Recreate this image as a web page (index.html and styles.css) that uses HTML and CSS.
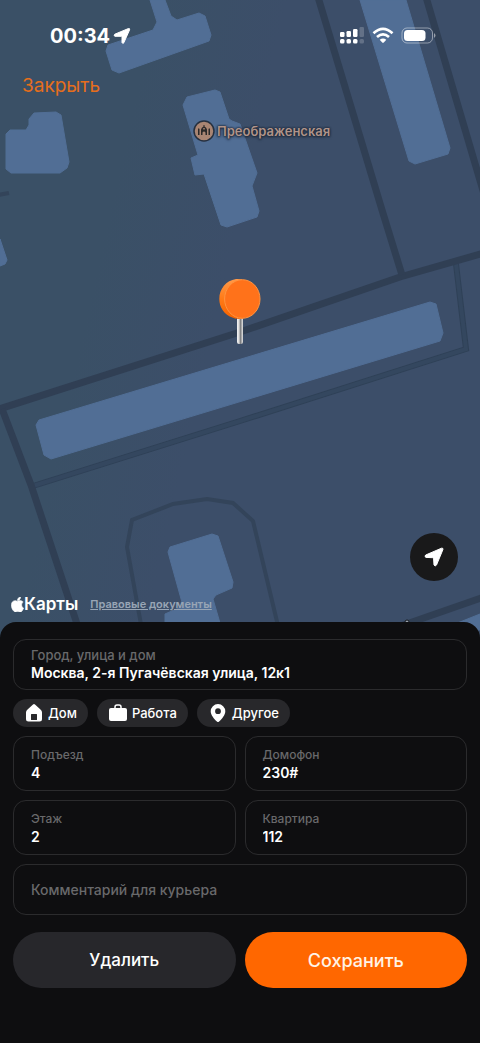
FILE: index.html
```html
<!DOCTYPE html>
<html lang="ru">

<head>
    <meta charset="UTF-8">
    <meta name="viewport" content="width=device-width, initial-scale=1.0">
    <title>Адрес доставки</title>
    <link rel="stylesheet" href="styles.css">
</head>

<body>
    <main class="map">
        <svg class="map-canvas" viewBox="0 0 480 640" preserveAspectRatio="xMidYMin slice" aria-hidden="true">
            <defs>
                <linearGradient id="land" x1="0" y1="0" x2="1" y2="0.3">
                    <stop offset="0.3" stop-color="#3a5066" />
                    <stop offset="0.55" stop-color="#3c4e69" />
                </linearGradient>
            </defs>
            <rect width="480" height="640" fill="url(#land)" />
            <!-- Paths -->
            <g class="path-edge">
                <path d="M33 486L240 421L466 349L456 264" />
            </g>
            <g class="path">
                <path d="M33 486L240 421L466 349L456 264" />
            </g>
            <!-- Roads -->
            <g class="road">
                <path d="M-4 410L240 332L400 277L484 253" />
                <path d="M318 -3L382 210L402 275" />
                <path d="M426 -3L474 160L484 194" />
                <path d="M2 409L31 485L79 630" />
                <path d="M484 597L395 628" />
            </g>
            <path class="lane" d="M142 630L127 547L132 520L173 504L207 499L233 503L253 521L279 630" />
            <path class="lane" d="M-2 195L9 193" />
            <!-- Buildings -->
            <g class="building">
                <path d="M150 0H165L171 16L177 20L199 13L205 16L211 35L209 41L119 73L112 70L106 51L108 45L153 30L157 22Z" />
                <path d="M6 134L10 130H26L29 125V119L34 113L56 112L61 115L69 162L67 168L60 173H11L6 169Z" />
                <path d="M0 239L7 260L5 264L0 266Z" />
                <path d="M187 97L215 90L220 92L229 119L232 121L240 124L257 173L252 186L259 211L257 217L227 227L221 225L204 174L195 175L191 158L198 155L183 105Z" />
                <path d="M360 0H406L450 148L448 154L415 164L409 161Z" />
                <path d="M36 425L39 420L430 302L436 304L443 333L440 341L51 459L44 455Z" />
                <path d="M168 552L170 547L212 534L218 536L233 582L232 588L216 595L213 599L222 630H165V614L183 606Z" />
                <path d="M480 614L440 630H480Z" />
            </g>
            <circle cx="407" cy="622" r="2" fill="#9aa3ad" stroke="#15181d" />
        </svg>

        <header class="status-bar">
            <div class="status-time">
                <span>00:34</span>
                <svg width="18" height="18" viewBox="0 0 18 18" aria-hidden="true">
                    <path d="M15.500 1.500Q17 1.200 16.600 2.800L10.800 15.800Q9.800 17.200 9 15.600V9.800Q9 9.300 8.400 9.300H2Q.200 8.600 1.800 7.200Z" fill="#fff" stroke="#fff" stroke-linejoin="round" />
                </svg>
            </div>
            <svg class="status-icons" width="98" height="18" viewBox="0 0 98 18" fill="#fff" aria-hidden="true">
                <rect x="1" y="5" width="4.500" height="5" rx="1.200" />
                <rect x="7.500" y="4" width="4.500" height="6" rx="1.200" />
                <rect x="14" y="2" width="4.500" height="8" rx="1.200" />
                <rect x="20.500" y="0" width="4.500" height="10" rx="1.200" opacity=".2" />
                <rect x="1" y="12" width="4.500" height="4.500" rx="1.500" />
                <rect x="7.500" y="12" width="4.500" height="4.500" rx="1.500" />
                <rect x="14" y="12" width="4.500" height="4.500" rx="1.500" />
                <rect x="20.500" y="12" width="4.500" height="4.500" rx="1.500" opacity=".2" />
                <g fill="none" stroke="#fff" stroke-width="2.700">
                    <path d="M34.500 6.200Q44 -2.400 53.500 6.200" />
                    <path d="M38 10Q44 4.600 50 10" />
                </g>
                <path d="M40.700 12.800Q44 10 47.300 12.800L44.800 15.400Q44 16 43.200 15.400Z" />
                <rect x="63" y="1" width="30.500" height="15" rx="5" fill="none" stroke="#fff" stroke-opacity=".45" />
                <path d="M95 6Q98 8.500 95 11Z" opacity=".5" />
                <rect x="65" y="3" width="21.500" height="11" rx="3.500" />
            </svg>
        </header>

        <button type="button" class="close-button">Закрыть</button>

        <div class="poi">
            <svg width="22" height="22" viewBox="0 0 22 22" aria-hidden="true">
                <circle cx="11" cy="11" r="10" fill="#a98573" stroke="#26303f" stroke-width="1.500" />
                <g fill="#2b2929">
                    <path d="M5 9Q5.700 7.500 6.500 9V15H5ZM15.500 9Q16.300 7.500 17 9V15H15.500Z" />
                    <path fill-rule="evenodd" d="M8 15V9.500Q8.500 7.500 10.500 6.500V5H11.500V6.500Q13.500 7.500 14 9.500V15H12.500V12.500Q11 10.500 9.500 12.500V15ZM10.200 9.500H11.800V8H10.200Z" />
                </g>
            </svg>
            <span>Преображенская</span>
        </div>

        <svg class="pin" width="44" height="68" viewBox="0 0 44 68" aria-hidden="true">
            <defs>
                <linearGradient id="needle">
                    <stop offset="0" stop-color="#f4f4f4" />
                    <stop offset="0.350" stop-color="#d8d8d8" />
                    <stop offset="0.550" stop-color="#77797c" />
                    <stop offset="1" stop-color="#e6e6e6" />
                </linearGradient>
                <linearGradient id="rim" x1="0" y1="0" x2="0" y2="1">
                    <stop offset="0" stop-color="#ff9a4a" />
                    <stop offset="0.500" stop-color="#ff7a16" />
                    <stop offset="1" stop-color="#f66200" />
                </linearGradient>
            </defs>
            <rect x="19" y="39" width="6" height="27" rx="2" fill="url(#needle)" />
            <path d="M18 1C20 .800 22 1 24 1.500L25 40.500C22 41.200 18 41.200 15 39.800C6 37 1.300 29 1.300 21C1.300 11 8 2.500 18 1Z" fill="url(#rim)" />
            <ellipse cx="24.300" cy="21" rx="17.700" ry="19.300" fill="#ff721a" stroke="#ff9440" stroke-width="1" />
        </svg>

        <button type="button" class="locate-button" aria-label="Моё местоположение">
            <svg width="20" height="20" viewBox="0 0 20 20" aria-hidden="true">
                <path d="M17.500 1.200Q19.400 .800 18.900 2.600L12.500 18Q11.200 19.800 10 18L9.600 11.800Q9.500 10.700 8.500 10.700L2 10.400Q0 9.500 1.700 8Z" fill="#fff" stroke="#fff" stroke-linejoin="round" />
            </svg>
        </button>

        <footer class="attribution">
            <span class="maps-logo">
                <svg width="13" height="15" viewBox="2 0 20 24" aria-hidden="true">
                    <path fill="#fff" stroke="#fff" d="M12.152 6.896c-.948 0-2.415-1.078-3.960-1.040-2.040.027-3.910 1.183-4.961 3.014-2.117 3.675-.546 9.103 1.519 12.090 1.013 1.454 2.208 3.090 3.792 3.039 1.520-.065 2.090-.987 3.935-.987 1.831 0 2.350.987 3.960.948 1.637-.026 2.676-1.480 3.676-2.948 1.156-1.688 1.636-3.325 1.662-3.415-.039-.013-3.182-1.221-3.220-4.857-.026-3.040 2.480-4.494 2.597-4.559-1.429-2.090-3.623-2.324-4.390-2.376-2-.156-3.675 1.090-4.610 1.090zM15.530 3.830c.843-1.012 1.400-2.427 1.245-3.830-1.207.052-2.662.805-3.532 1.818-.780.896-1.454 2.338-1.273 3.714 1.338.104 2.715-.688 3.559-1.701" />
                </svg>
                Карты
            </span>
            <a href="#" class="legal-link">Правовые документы</a>
        </footer>
    </main>

    <form class="sheet">
        <div class="field field-wide">
            <label for="address">Город, улица и дом</label>
            <input type="text" id="address" name="address" value="Москва, 2-я Пугачёвская улица, 12к1">
        </div>

        <div class="chips">
            <button type="button" class="chip">
                <svg width="18" height="18" viewBox="0 0 18 18" aria-hidden="true">
                    <path fill="#fff" fill-rule="evenodd" d="M8 .500Q9 -.300 10 .500L16 6Q17 7 17 8.500V15Q17 17.500 14.500 17.500H3.500Q1 17.500 1 15V8.500Q1 7 2 6ZM6.500 10Q6 10 6 10.500V15.500Q6 16 6.500 16H11.500Q12 16 12 15.500V10.500Q12 10 11.500 10Z" />
                </svg>
                Дом
            </button>
            <button type="button" class="chip">
                <svg width="18" height="18" viewBox="0 0 18 18" aria-hidden="true">
                    <rect x="0" y="4" width="18" height="13" rx="2" fill="#fff" />
                    <path d="M6 4V3Q6 1 8 1H10Q12 1 12 3V4" fill="none" stroke="#fff" stroke-width="1.500" />
                </svg>
                Работа
            </button>
            <button type="button" class="chip">
                <svg width="18" height="18" viewBox="0 0 18 18" aria-hidden="true">
                    <path fill="#fff" fill-rule="evenodd" d="M9 0A7.300 7.300 0 0 1 16.300 7.300C16.300 11 13 15 9.800 17.800Q9 18.400 8.200 17.800C5 15 1.700 11 1.700 7.300A7.300 7.300 0 0 1 9 0ZM9 4.300A2.900 2.900 0 1 0 9 10.100A2.900 2.900 0 1 0 9 4.300Z" />
                </svg>
                Другое
            </button>
        </div>

        <div class="field-grid">
            <div class="field">
                <label for="entrance">Подъезд</label>
                <input type="text" id="entrance" name="entrance" value="4">
            </div>
            <div class="field">
                <label for="intercom">Домофон</label>
                <input type="text" id="intercom" name="intercom" value="230#">
            </div>
            <div class="field">
                <label for="floor">Этаж</label>
                <input type="text" id="floor" name="floor" value="2">
            </div>
            <div class="field">
                <label for="flat">Квартира</label>
                <input type="text" id="flat" name="flat" value="112">
            </div>
        </div>

        <div class="field field-wide">
            <input type="text" id="comment" name="comment" placeholder="Комментарий для курьера" aria-label="Комментарий для курьера">
        </div>

        <div class="actions">
            <button type="button" class="action">Удалить</button>
            <button type="submit" class="action action-primary">Сохранить</button>
        </div>
    </form>
</body>

</html>
```
FILE: styles.css
```css
* {
    box-sizing: border-box;
}

body {
    display: flex;
    flex-direction: column;
    min-height: 100vh;
    margin: 0;
    background-color: #0e0e10;
    color: #fff;
    font-family: Inter, "Liberation Sans", sans-serif;
}

button,
input {
    font-family: inherit;
    color: inherit;
}

button {
    border: none;
    cursor: pointer;
}

svg {
    display: block;
    flex-shrink: 0;
}

/* Map */

.map {
    position: relative;
    display: flex;
    flex: 1;
    flex-direction: column;
    align-items: flex-start;
    min-height: 400px;
    padding-bottom: 26px;
    overflow: hidden;
}

.map-canvas {
    position: absolute;
    top: 0;
    left: 0;
    z-index: -1;
    width: 100%;
    height: 100%;
}

.road,
.path,
.path-edge,
.lane {
    fill: none;
    stroke: #303f54;
    stroke-width: 7px;
}

.path {
    stroke: #34475f;
    stroke-width: 4px;
}

.path-edge {
    stroke: #2f4157;
    stroke-width: 6px;
}

.lane {
    stroke: #33445a;
    stroke-width: 4px;
}

.building {
    fill: #516e95;
    stroke: #516e95;
    stroke-linejoin: round;
}

.status-bar {
    display: flex;
    justify-content: space-between;
    align-items: center;
    width: 100%;
    padding: 24px 43px 0 50px;
}

.status-time {
    display: flex;
    align-items: center;
    gap: 3px;
    font-size: 20px;
    font-weight: 700;
    line-height: 24px;
}

.close-button {
    margin: 25px 0 0 22px;
    padding: 0;
    background: none;
    color: #e66e1c;
    font-size: 19px;
    line-height: 26px;
}

.poi {
    position: absolute;
    top: 120px;
    left: calc(50% - 47px);
    display: flex;
    align-items: center;
    gap: 2px;
    color: #b0948a;
    font-size: 13px;
    font-weight: 600;
    text-shadow: 0 0 2px #1c2636, 0 0 2px #1c2636, 0 1px 3px #1c2636;
}

.pin {
    position: absolute;
    top: 278px;
    left: calc(50% - 22px);
}

.locate-button {
    display: grid;
    place-items: center;
    width: 48px;
    height: 48px;
    margin: auto 22px 13px auto;
    padding: 0;
    border-radius: 50%;
    background-color: #19191a;
}

.attribution {
    display: flex;
    align-items: center;
    gap: 12px;
    padding-left: 11px;
    line-height: 20px;
}

.maps-logo {
    display: flex;
    align-items: center;
    font-size: 17px;
    font-weight: 600;
}

.legal-link {
    color: #98a5b5;
    font-size: 11px;
    font-weight: 600;
}

/* Address sheet */

.sheet {
    position: relative;
    display: flex;
    flex-direction: column;
    gap: 9px;
    margin-top: -18px;
    padding: 17px 13px 55px;
    border-radius: 16px 16px 0 0;
    background-color: #0e0e10;
}

.field {
    display: flex;
    flex-direction: column;
    justify-content: center;
    gap: 1px;
    min-width: 0;
    height: 55px;
    padding: 0 17px;
    border: 1px solid #2b2b2d;
    border-radius: 13px;
}

.field-wide {
    gap: 0;
    height: 51px;
}

.field label {
    color: #69696b;
    font-size: 12px;
    font-weight: 500;
    line-height: 17px;
}

.field-wide label {
    font-size: 13px;
}

.field input {
    width: 100%;
    padding: 0;
    border: none;
    outline: none;
    background: none;
    font-size: 14px;
    font-weight: 600;
    line-height: 18px;
}

.field input::placeholder {
    color: #69696b;
    font-weight: 500;
    opacity: 1;
}

.chips {
    display: flex;
    gap: 9px;
}

.chip {
    display: flex;
    align-items: center;
    gap: 5px;
    height: 28px;
    padding: 0 11px 0 12px;
    border-radius: 14px;
    background-color: #28282b;
    font-size: 13px;
    font-weight: 500;
}

.field-grid,
.actions {
    display: grid;
    grid-template-columns: 1fr 1fr;
    gap: 9px;
}

.actions {
    margin-top: 8px;
}

.action {
    height: 56px;
    border-radius: 28px;
    background-color: #27272b;
    font-size: 17px;
    font-weight: 500;
}

.action-primary {
    background-color: #ff6700;
    color: #fff3e6;
    font-size: 18px;
}
```
